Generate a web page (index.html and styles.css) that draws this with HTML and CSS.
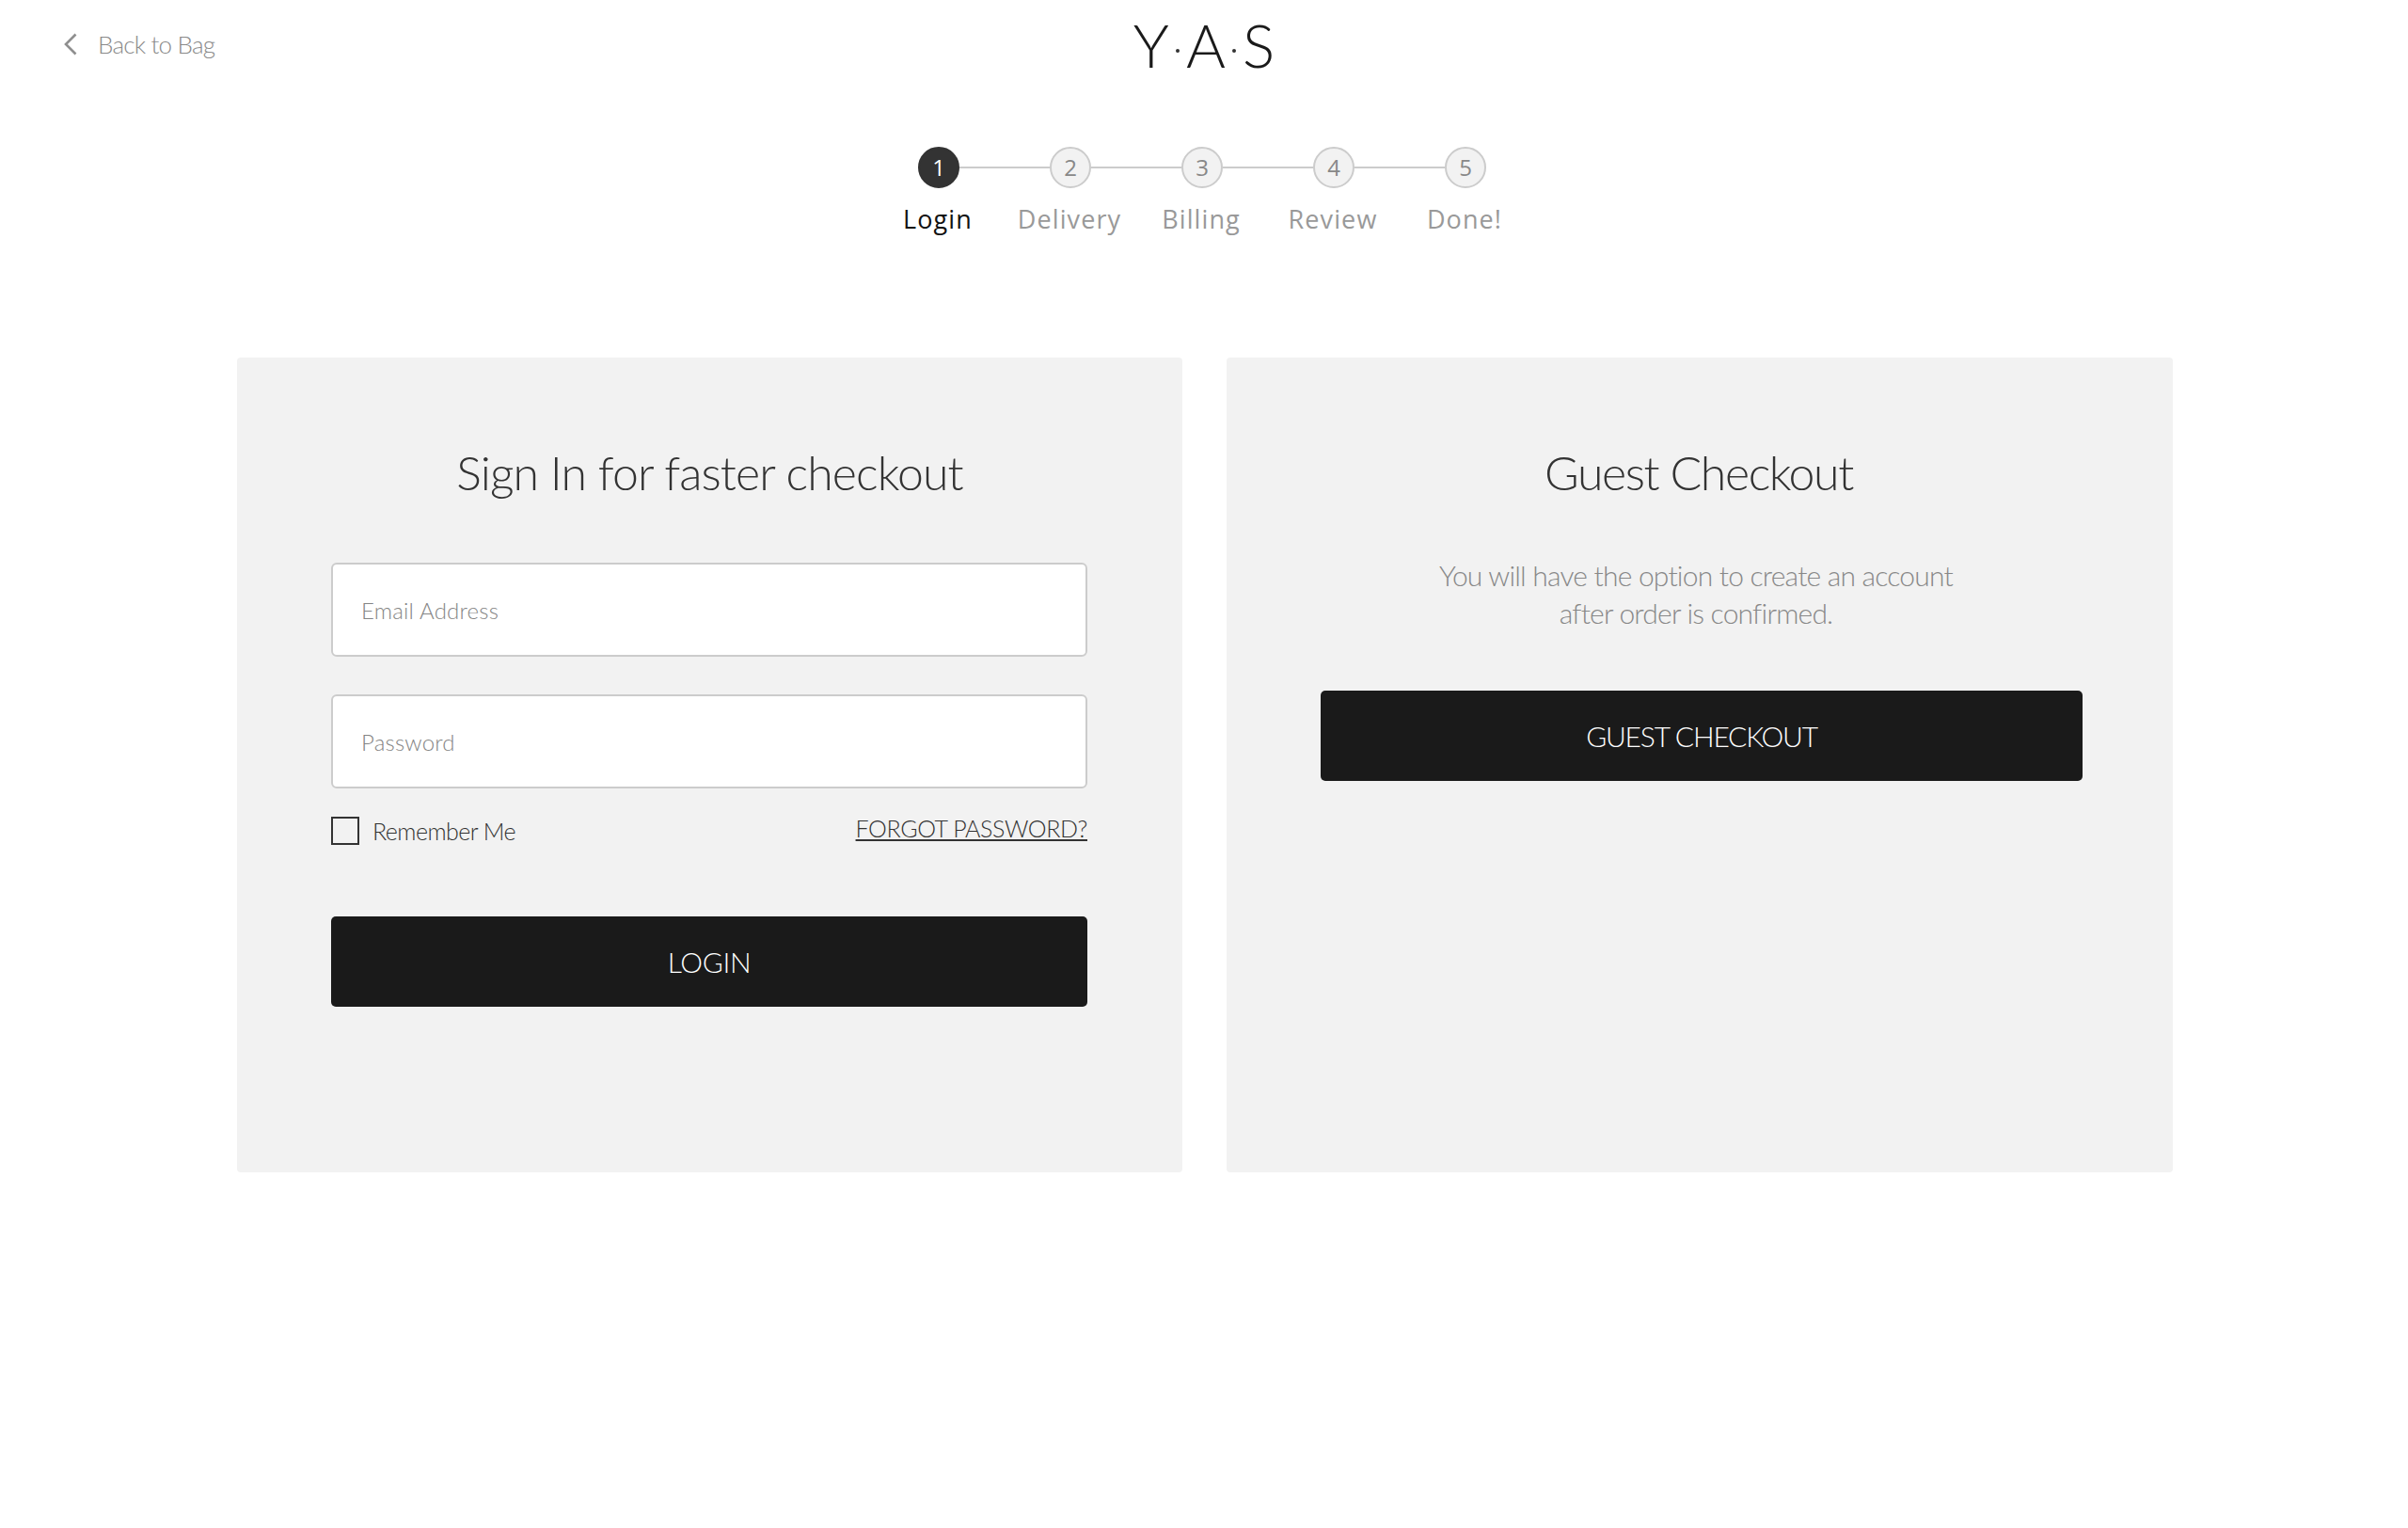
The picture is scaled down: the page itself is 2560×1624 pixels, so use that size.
FILE: index.html
```html
<!DOCTYPE html>
<html lang="en">
<head>
  <meta charset="UTF-8">
  <meta name="viewport" content="width=device-width, initial-scale=1.0">
  <title>Checkout - Y.A.S</title>
  <link rel="stylesheet" href="styles.css">
</head>
<body>

  <header class="topbar">
    <a class="back" href="#">
      <svg class="back-icon" width="14" height="24" viewBox="0 0 14 24" fill="none">
        <path d="M12.5 1.5 L2 12 L12.5 22.5" stroke="#8f8f8f" stroke-width="2.6"/>
      </svg>
      <span>Back to Bag</span>
    </a>
    <a class="logo" href="#">
      <span>Y</span><i class="dot"></i><span>A</span><i class="dot"></i><span>S</span>
    </a>
  </header>

  <div class="stepper">
    <div class="step-row">
      <span class="circle active">1</span>
      <span class="line"></span>
      <span class="circle">2</span>
      <span class="line"></span>
      <span class="circle">3</span>
      <span class="line"></span>
      <span class="circle">4</span>
      <span class="line"></span>
      <span class="circle">5</span>
    </div>
    <div class="label-row">
      <span class="active">Login</span>
      <span>Delivery</span>
      <span>Billing</span>
      <span>Review</span>
      <span>Done!</span>
    </div>
  </div>

  <main class="panels">
    <section class="panel">
      <h1>Sign In for faster checkout</h1>
      <form class="login-form">
        <input class="field" type="text" placeholder="Email Address">
        <input class="field" type="password" placeholder="Password">
        <div class="options">
          <label class="remember">
            <span class="box"></span>
            <span>Remember Me</span>
          </label>
          <a class="forgot" href="#">FORGOT PASSWORD?</a>
        </div>
        <button class="boton" type="button">LOGIN</button>
      </form>
    </section>

    <section class="panel guest">
      <h1>Guest Checkout</h1>
      <p>You will have the option to create an account<br>after order is confirmed.</p>
      <button class="boton" type="button">GUEST CHECKOUT</button>
    </section>
  </main>

</body>
</html>
```
FILE: styles.css
```css
* {
  margin: 0;
  padding: 0;
  box-sizing: border-box;
}

body {
  font-family: "Lato", sans-serif;
  background-color: #ffffff;
  color: #333;
}

.topbar {
  display: grid;
  grid-template-columns: 1fr auto 1fr;
  align-items: center;
  height: 96px;
  padding: 0 68px;
}

.back {
  display: flex;
  align-items: center;
  gap: 22px;
  margin-top: -2px;
  color: #8a8a8a;
  text-decoration: none;
  font-size: 26px;
  font-weight: 300;
  letter-spacing: -0.8px;
}

.logo {
  display: flex;
  align-items: center;
  gap: 7px;
  margin-top: -1px;
  color: #1a1a1a;
  text-decoration: none;
  font-size: 64px;
  font-weight: 300;
  line-height: 96px;
}

.logo .dot {
  width: 4px;
  height: 4px;
  margin-top: 12px;
  border-radius: 50%;
  background-color: #333;
}

.stepper {
  display: flex;
  flex-direction: column;
  align-items: center;
  margin-top: 60px;
  margin-left: -4px;
}

.step-row {
  display: flex;
  align-items: center;
  height: 44px;
}

.circle {
  display: flex;
  align-items: center;
  justify-content: center;
  width: 44px;
  height: 44px;
  padding-bottom: 2px;
  border: 2px solid #ccc;
  border-radius: 50%;
  background-color: #f2f2f2;
  color: #888;
  font-family: "Open Sans", sans-serif;
  font-size: 24px;
}

.circle.active {
  border-color: #333;
  background-color: #333;
  color: #fff;
}

.line {
  width: 96px;
  height: 2px;
  margin-top: -1px;
  background-color: #ccc;
}

.label-row {
  display: grid;
  grid-template-columns: repeat(5, 140px);
  margin-top: 15px;
  margin-left: -2px;
  text-align: center;
  font-family: "Open Sans", sans-serif;
  font-size: 27px;
  line-height: 36px;
  letter-spacing: 1.1px;
  color: #999;
}

.label-row .active {
  color: #111;
}

.panels {
  display: flex;
  gap: 47px;
  margin-top: 129px;
  margin-left: 252px;
}

.panel {
  width: 1005px;
  height: 866px;
  padding: 90px 100px 0;
  border-radius: 4px;
  background-color: #f2f2f2;
}

.panel h1 {
  font-size: 50px;
  font-weight: 300;
  line-height: 64px;
  letter-spacing: -0.9px;
  text-align: center;
  color: #333;
}

.login-form {
  display: flex;
  flex-direction: column;
  width: 804px;
  margin-top: 64px;
}

.field {
  width: 100%;
  height: 100px;
  margin-bottom: 40px;
  padding: 0 30px;
  border: 2px solid #ccc;
  border-radius: 6px;
  background-color: #fff;
  font-family: "Lato", sans-serif;
  font-size: 24px;
  font-weight: 300;
  letter-spacing: 0.2px;
}

.field::placeholder {
  color: #858585;
}

.field:last-of-type {
  margin-bottom: 0;
}

.options {
  display: flex;
  justify-content: space-between;
  align-items: flex-start;
  height: 106px;
  margin-top: 30px;
}

.remember {
  display: flex;
  align-items: center;
  gap: 14px;
  font-size: 25px;
  font-weight: 300;
  letter-spacing: -0.55px;
}

.box {
  width: 30px;
  height: 30px;
  border: 2px solid #333;
}

.forgot {
  margin-top: -3px;
  color: #333;
  font-size: 25px;
  font-weight: 300;
  letter-spacing: -0.4px;
}

.boton {
  display: block;
  width: 100%;
  height: 96px;
  border: none;
  border-radius: 5px;
  background-color: #1a1a1a;
  color: #fff;
  font-family: "Lato", sans-serif;
  font-size: 30px;
  font-weight: 300;
  letter-spacing: -0.3px;
  cursor: pointer;
}

.guest {
  width: 1006px;
}

.guest h1 {
  padding-right: 2px;
  letter-spacing: -1.4px;
}

.guest p {
  margin-top: 57px;
  padding-right: 8px;
  font-size: 30px;
  font-weight: 300;
  line-height: 40px;
  letter-spacing: -0.8px;
  text-align: center;
  color: #888;
}

.guest .boton {
  width: 810px;
  margin-top: 63px;
  letter-spacing: -1.2px;
}
```
